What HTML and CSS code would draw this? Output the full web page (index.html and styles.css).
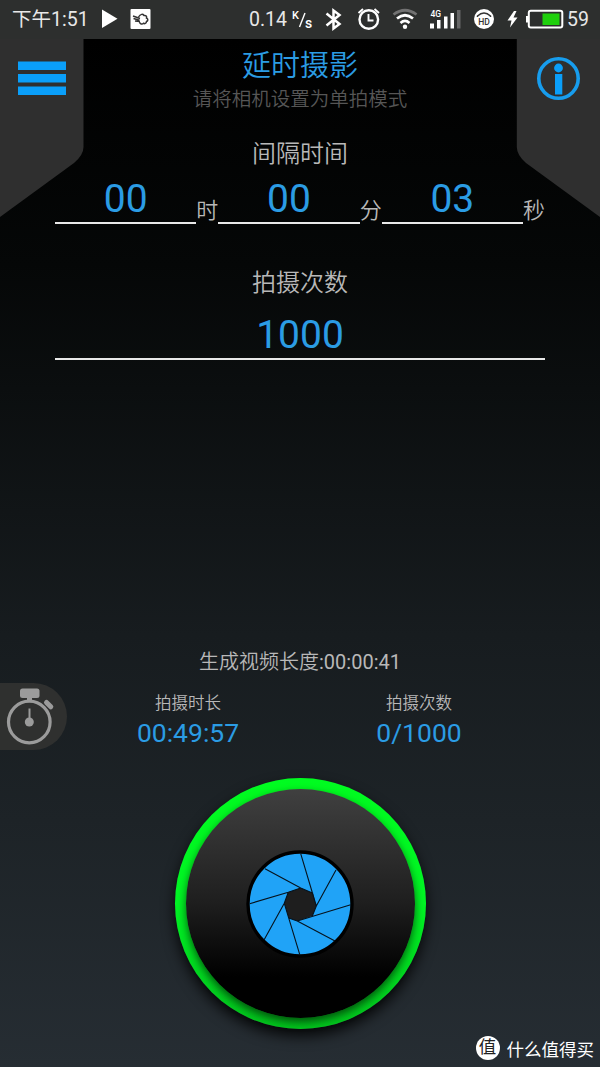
FILE: index.html
```html
<!DOCTYPE html>
<html lang="zh-CN">
<head>
    <meta charset="UTF-8">
    <meta name="viewport" content="width=device-width, initial-scale=1.0">
    <title>延时摄影</title>
    <link rel="stylesheet" href="styles.css">
</head>
<body>
    <div class="status-bar">
        <span class="clock">下午1:51</span>
        <svg class="status-left" width="54" height="24" viewBox="0 0 54 24">
            <path d="M2 1.500L17.500 10.800L2 20z" fill="#fff"/>
            <rect x="30.500" y="1" width="20" height="20" rx="1" fill="#fff"/>
            <path d="M33 8l7 2.500M33.500 10.500l6 1.800M35 13l5 .5M38.500 9c2-3.500 4.500-3 5.500-1.500c2-.5 3 1 2.500 2.500c2 1 1.500 3 0 3.500c0 2-2 2.500-3 1.800c-1.500 1.500-3.500.5-4-1" fill="none" stroke="#333" stroke-width="1.500"/>
        </svg>
        <span class="speed">0.14</span>
        <!-- K/s, bluetooth, alarm, wifi, signal, HD, battery -->
        <svg class="status-icons" width="276" height="38" viewBox="290 0 276 38">
            <g fill="#fff" font-family="Roboto, sans-serif">
                <text x="292" y="17.500" font-size="11" font-weight="500">K</text>
                <text x="305" y="26.500" font-size="14" font-weight="500">s</text>
                <text x="430.500" y="15.500" font-size="8.500" font-weight="500">4G</text>
            </g>
            <path d="M299.500 26L305 12" stroke="#fff" stroke-width="1.400"/>
            <path d="M326.500 12.500L339.500 23L333.500 27.500V9.500L339.500 14L326.500 24.500" fill="none" stroke="#fff" stroke-width="2.500"/>
            <circle cx="368.800" cy="18.500" r="9.300" fill="none" stroke="#fff" stroke-width="2.400"/>
            <path d="M368.500 13v6.500h5M358.500 12l4.500-4M379 12l-4.500-4" fill="none" stroke="#fff" stroke-width="1.900"/>
            <g fill="none" stroke-width="2.700">
                <path d="M393.500 13.500Q405 5 416.500 13.500" stroke="#727272"/>
                <path d="M397 17.500Q405 11 413 17.500M400.500 21.900Q405 18 409.500 21.900" stroke="#fff"/>
            </g>
            <circle cx="405" cy="25.800" r="2.200" fill="#fff"/>
            <path d="M430 22.500h4v5h-4zM437 19h3.500v8.500H437zM444 15.500h3.500v12H444zM450.500 12h3.500v15.500h-3.500z" fill="#fff"/>
            <path d="M457 9h3.500v18.500H457z" fill="#666"/>
            <circle cx="484" cy="18" r="10" fill="#fff"/>
            <path d="M477.500 16v-1q6.500-6 13 0v1" fill="none" stroke="#333" stroke-width="1.500"/>
            <text x="484" y="23.500" text-anchor="middle" font-family="Roboto, sans-serif" font-size="8.500" font-weight="500" fill="#333">HD</text>
            <path d="M514 10L507.500 19.500H511.500L510 26.500L517.500 16.500H513.500L516.500 10z" fill="#fff"/>
            <rect x="528.800" y="9.800" width="33.500" height="16.800" rx="2" fill="none" stroke="#fff" stroke-width="2"/>
            <path d="M526 15h2.500v6.500H526z" fill="#fff"/>
            <path d="M542.500 12.500h17v11.500h-17z" fill="#1fd00c"/>
        </svg>
        <span class="battery">59</span>
    </div>

    <div class="screen">
        <svg class="corner corner-left" width="84" height="180" viewBox="0 0 84 180">
            <path d="M0 0H83.500V108Q83.500 116 74 124L0 178z" fill="#2f2f2f"/>
            <path d="M18 22.500h48v8.500H18zM18 35h48v8.500H18zM18 47.500h48v8.500H18z" fill="#0a9ffa"/>
        </svg>
        <svg class="corner corner-right" width="84" height="180" viewBox="0 0 84 180">
            <path d="M84 0H.8V108Q.8 116 10 124L84 178z" fill="#2f2f2f"/>
            <circle cx="42.500" cy="39.500" r="19.700" fill="none" stroke="#179dee" stroke-width="3.600"/>
            <circle cx="42.500" cy="29" r="4.400" fill="#0a9ffa"/>
            <path d="M39 35h7.300v20.500H39z" fill="#0a9ffa"/>
        </svg>

        <h1>延时摄影</h1>
        <p class="tip">请将相机设置为单拍模式</p>

        <h2>间隔时间</h2>
        <div class="interval">
            <span class="field">00</span><span class="unit">时</span>
            <span class="field">00</span><span class="unit">分</span>
            <span class="field">03</span><span class="unit">秒</span>
        </div>

        <h2 class="count-title">拍摄次数</h2>
        <div class="count field">1000</div>

        <p class="video-length">生成视频长度<span>:00:00:41</span></p>
        <div class="stats">
            <div class="stat">
                <span class="label">拍摄时长</span>
                <span class="value">00:49:57</span>
            </div>
            <div class="stat">
                <span class="label">拍摄次数</span>
                <span class="value">0/1000</span>
            </div>
        </div>

        <div class="timer">
            <svg width="66" height="66" viewBox="0 0 66 66">
                <circle cx="29.300" cy="39" r="20.800" fill="none" stroke="#9b9b9b" stroke-width="3.200"/>
                <rect x="20" y="5.500" width="19.500" height="9.500" rx="2.500" fill="#9b9b9b"/>
                <path d="M27 14h5v5h-5z" fill="#9b9b9b"/>
                <path d="M46.500 19.500L50.800 23.800" stroke="#9b9b9b" stroke-width="5" stroke-linecap="round"/>
                <path d="M29.500 25.500V39" stroke="#9b9b9b" stroke-width="2"/>
                <circle cx="29.300" cy="39" r="4.500" fill="#9b9b9b"/>
            </svg>
        </div>

        <div class="shutter">
            <div class="shutter-inner">
                <svg width="108" height="108" viewBox="0 0 108 108">
                    <circle cx="54" cy="54" r="52" fill="#20a3f7" stroke="#000" stroke-width="3.400"/>
                    <path d="M54.700 38L67 43.300L70.300 56L66.300 66L51.300 71L42.700 68L38.300 53.300L42.300 42.300z" fill="#1e1e1e"/>
                    <path d="M19 18.700L54.700 38L67 43.300M54.700 3.700L70.300 56M90 20L70.300 56M104.700 54.700L51.300 71M89 91L51.300 71L42.700 68M54 105.300L38.300 53.300M18 90L38.300 53.300M3.700 53.700L42.300 42.300L54.700 38M70.300 56L66.300 66M38.300 53.300L42.300 42.300" fill="none" stroke="#06121c" stroke-width="1.100"/>
                </svg>
            </div>
        </div>

        <div class="watermark">
            <span class="badge">值</span>
            <span>什么值得买</span>
        </div>
    </div>
</body>
</html>
```

FILE: styles.css
```css
* {
    box-sizing: border-box;
}
body {
    margin: 0;
    height: 1067px;
    overflow: hidden;
    font-family: Roboto, "Noto Sans CJK SC", sans-serif;
    background-color: #000;
    color: #b8b8b8;
}
h1, h2, p {
    margin: 0;
    font-weight: 350;
    text-align: center;
}
.status-bar {
    display: flex;
    align-items: center;
    height: 39px;
    padding-left: 12px;
    background-color: #2d2f2e;
    color: #e8e8e8;
    font-size: 19.5px;
    line-height: 37px;
    white-space: nowrap;
}
.clock {
    width: 88px;
}
.speed {
    width: 41px;
    margin-left: 95px;
}
.battery {
    margin-left: 1px;
}
.screen {
    position: relative;
    height: 1028px;
    overflow: hidden;
    padding: 6px 55px 0;
    background: linear-gradient(#000 0%, #050707 22%, #171c1f 58%, #1d2327 76%, #262d33 100%);
}
.corner {
    position: absolute;
    top: 0;
}
.corner-left {
    left: 0;
}
.corner-right {
    right: 0;
}
h1 {
    height: 42px;
    line-height: 43px;
    font-size: 29px;
    color: #2b9ce4;
}
.tip {
    height: 24px;
    line-height: 25px;
    font-size: 19.5px;
    color: #565656;
}
h2 {
    margin-top: 27px;
    height: 32px;
    line-height: 32px;
    font-size: 24px;
}
.interval {
    display: flex;
    margin-top: 9px;
    height: 45px;
}
.field {
    flex: 1;
    height: 45px;
    border-bottom: 2px solid #e8e8e8;
    color: #2b9ce4;
    font-size: 39px;
    line-height: 41px;
    text-align: center;
}
.unit {
    width: 22px;
    padding-top: 16px;
    font-size: 22px;
    font-weight: 350;
    line-height: 32px;
}
.count-title {
    margin-top: 43px;
}
.count {
    margin-top: 16px;
}
.video-length {
    margin-top: 288px;
    height: 28px;
    line-height: 28px;
    font-size: 20px;
}
.video-length span {
    font-weight: 400;
}
.stats {
    display: flex;
    justify-content: center;
    margin: 15px -5px 0 2px;
}
.stat {
    display: flex;
    flex-direction: column;
    align-items: center;
    width: 231px;
}
.label {
    height: 25px;
    line-height: 26px;
    font-size: 16.5px;
    font-weight: 350;
}
.value {
    height: 34px;
    line-height: 34px;
    font-size: 26.5px;
    color: #2b9ce4;
}
.timer {
    position: absolute;
    left: 0;
    top: 644px;
    width: 67px;
    height: 67px;
    border-radius: 0 34px 34px 0;
    background-color: #2f302f;
}
.shutter {
    width: 251px;
    height: 251px;
    margin: 28px auto 0;
    padding: 11px;
    border-radius: 50%;
    background: linear-gradient(#00fc20, #00f424 50%, #02c41c);
    box-shadow: 0 7px 14px rgba(0, 0, 0, 0.85);
}
.shutter-inner {
    display: flex;
    align-items: center;
    justify-content: center;
    width: 229px;
    height: 229px;
    border-radius: 50%;
    background: linear-gradient(#404040, #1e1e1e 50%, #000 82%);
    box-shadow: 0 4px 8px rgba(0, 0, 0, 0.6);
}
.watermark {
    position: absolute;
    right: 6px;
    bottom: 6px;
    display: flex;
    align-items: center;
    gap: 7px;
    height: 26px;
    font-size: 17.5px;
    color: #fff;
}
.badge {
    width: 24px;
    height: 24px;
    border-radius: 50%;
    background-color: #fff;
    color: #222;
    line-height: 23px;
    text-align: center;
}
```
